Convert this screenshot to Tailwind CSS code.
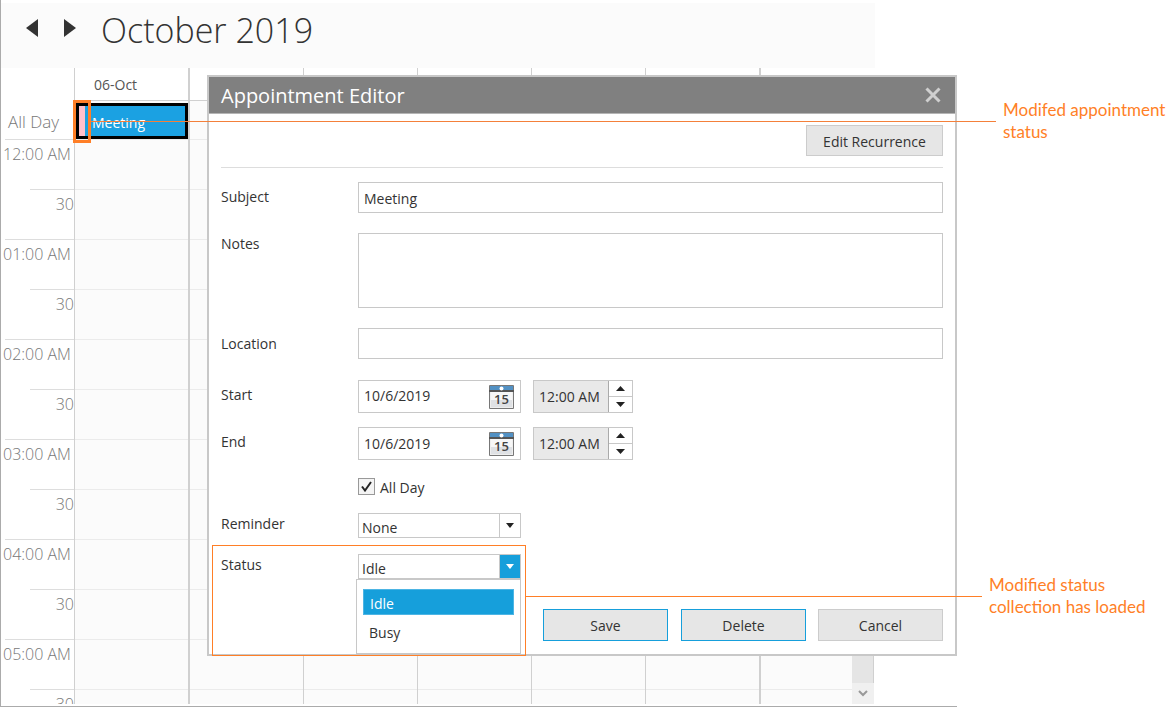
<!DOCTYPE html>
<html lang="en">
<head>
<meta charset="utf-8">
<title>Appointment Editor</title>
<script src="https://cdn.jsdelivr.net/npm/@tailwindcss/browser@4"></script>
</head>
<body class="bg-white">
<div class="flex h-screen overflow-hidden font-['Open_Sans','Noto_Sans',sans-serif] text-sm text-[#333]">
  <main class="relative flex flex-1 flex-col border-b border-l border-[#ababab] pt-[3px] pb-[2px]">
    <section class="mr-[82px] flex min-h-0 flex-1 flex-col" aria-label="Calendar">
      <header class="flex h-[65px] shrink-0 items-start bg-[#fbfbfb] pl-[25px]">
        <button type="button" aria-label="Previous" class="mt-4 h-[19px] w-3"><svg class="h-[19px] w-3" viewBox="0 0 12 19" fill="#333"><path d="M12 0v18L0 9z"/></svg></button>
        <button type="button" aria-label="Next" class="mt-4 ml-[26px] h-[19px] w-3"><svg class="h-[19px] w-3" viewBox="0 0 12 19" fill="#333"><path d="M0 0v18L12 9z"/></svg></button>
        <h1 class="ml-[25px] text-[34px] leading-[54px] font-light">October 2019</h1>
      </header>
      <div class="flex min-h-0 flex-1 overflow-hidden">
        <div class="w-[73px] shrink-0 pl-1 text-base leading-[28px] font-light whitespace-nowrap text-[#777]">
          <div class="h-[71px] pt-10 pl-[3px] text-[17px]">All Day</div>
          <div class="h-[50px] border-t border-[#ddd]"><span class="-ml-[2px]">12:00 AM</span></div>
          <div class="ml-[25px] h-[50px] border-t border-[#ddd] text-right">30</div>
          <div class="h-[50px] border-t border-[#ddd]"><span class="-ml-[2px]">01:00 AM</span></div>
          <div class="ml-[25px] h-[50px] border-t border-[#ddd] text-right">30</div>
          <div class="h-[50px] border-t border-[#ddd]"><span class="-ml-[2px]">02:00 AM</span></div>
          <div class="ml-[25px] h-[50px] border-t border-[#ddd] text-right">30</div>
          <div class="h-[50px] border-t border-[#ddd]"><span class="-ml-[2px]">03:00 AM</span></div>
          <div class="ml-[25px] h-[50px] border-t border-[#ddd] text-right">30</div>
          <div class="h-[50px] border-t border-[#ddd]"><span class="-ml-[2px]">04:00 AM</span></div>
          <div class="ml-[25px] h-[50px] border-t border-[#ddd] text-right">30</div>
          <div class="h-[50px] border-t border-[#ddd]"><span class="-ml-[2px]">05:00 AM</span></div>
          <div class="ml-[25px] h-[50px] border-t border-[#ddd] text-right">30</div>
        </div>
        <div class="flex w-[114px] shrink-0 flex-col border-l border-[#d0d0d0]">
          <div class="h-[33px] border-b border-[#d0d0d0] pl-[19px] leading-[33px] text-[#555]">06-Oct</div>
          <div class="h-[38px] bg-[#fbfbfb] pt-[2px] pl-px">
            <div class="flex h-9 border-[3px] border-black bg-[#1ba1e2] leading-[34px] text-white"><i class="w-[6px] bg-[#ffc0cb]"></i><span class="ml-[7px]">Meeting</span></div>
          </div>
          <div class="flex-1 bg-[repeating-linear-gradient(to_bottom,#ebebeb_0_1px,#fbfbfb_1px_50px)]"></div>
        </div>
        <div class="flex w-[115px] shrink-0 flex-col border-l-2 border-[#d0d0d0]">
          <div class="h-[33px] border-b border-[#d0d0d0]"></div><div class="h-[38px] bg-[#fbfbfb]"></div>
          <div class="flex-1 bg-[repeating-linear-gradient(to_bottom,#ebebeb_0_1px,#fbfbfb_1px_50px)]"></div>
        </div>
        <div class="flex w-[114px] shrink-0 flex-col border-l border-[#d0d0d0]">
          <div class="h-[33px] border-b border-[#d0d0d0]"></div><div class="h-[38px] bg-[#fbfbfb]"></div>
          <div class="flex-1 bg-[repeating-linear-gradient(to_bottom,#ebebeb_0_1px,#fbfbfb_1px_50px)]"></div>
        </div>
        <div class="flex w-[114px] shrink-0 flex-col border-l border-[#d0d0d0]">
          <div class="h-[33px] border-b border-[#d0d0d0]"></div><div class="h-[38px] bg-[#fbfbfb]"></div>
          <div class="flex-1 bg-[repeating-linear-gradient(to_bottom,#ebebeb_0_1px,#fbfbfb_1px_50px)]"></div>
        </div>
        <div class="flex w-[114px] shrink-0 flex-col border-l border-[#d0d0d0]">
          <div class="h-[33px] border-b border-[#d0d0d0]"></div><div class="h-[38px] bg-[#fbfbfb]"></div>
          <div class="flex-1 bg-[repeating-linear-gradient(to_bottom,#ebebeb_0_1px,#fbfbfb_1px_50px)]"></div>
        </div>
        <div class="flex w-[114px] shrink-0 flex-col border-l border-[#d0d0d0]">
          <div class="h-[33px] border-b border-[#d0d0d0]"></div><div class="h-[38px] bg-[#fbfbfb]"></div>
          <div class="flex-1 bg-[repeating-linear-gradient(to_bottom,#ebebeb_0_1px,#fbfbfb_1px_50px)]"></div>
        </div>
        <div class="flex flex-1 flex-col border-l-2 border-[#d0d0d0]">
          <div class="h-[33px] border-b border-[#d0d0d0]"></div><div class="h-[38px] bg-[#fbfbfb]"></div>
          <div class="flex-1 bg-[repeating-linear-gradient(to_bottom,#ebebeb_0_1px,#fbfbfb_1px_50px)]"></div>
        </div>
        <div class="flex w-[23px] shrink-0 flex-col pr-px">
          <div class="h-[33px] border-b border-[#d0d0d0]"></div>
          <div class="flex-1 border-r border-[#d0d0d0] bg-[#e5e5e5]"></div>
          <button type="button" aria-label="Scroll down" class="flex h-[21px] items-center justify-center bg-[#f0f0f0]"><svg width="10" height="7" fill="none" stroke="#999" stroke-width="2"><path d="M1 1l4 4 4-4"/></svg></button>
        </div>
      </div>
    </section>

    <form class="absolute top-[75px] right-0 left-[206px] border-2 border-[#c8c8c8] bg-white" aria-label="Appointment Editor">
      <div class="flex h-[37px] items-center justify-between border-b border-[#b5b5b5] bg-[#808080] pr-[14px] pl-3">
        <h2 class="pt-[2px] text-xl leading-[36px] text-white">Appointment Editor</h2>
        <button type="button" aria-label="Close"><svg width="16" height="16" stroke="#d0d0d0" stroke-width="3"><path d="M1.500 1.500l13 13M14.500 1.500l-13 13"/></svg></button>
      </div>
      <div class="px-3 pb-[13px]">
        <div class="flex justify-end pt-[11px]"><button type="button" class="h-[31px] w-[137px] border border-[#ccc] bg-[#e6e6e6] pt-[3px]">Edit Recurrence</button></div>
        <hr class="mt-[11px] border-[#ddd]">
        <div class="mt-[14px] flex"><label for="subject" class="w-[137px] leading-[30px]">Subject</label><input id="subject" value="Meeting" class="h-[31px] min-w-0 flex-1 border border-[#c8c8c8] px-[5px] pt-[2px]"></div>
        <div class="mt-5 flex"><label for="notes" class="w-[137px] leading-[22px]">Notes</label><textarea id="notes" class="h-[75px] min-w-0 flex-1 resize-none border border-[#c8c8c8] px-[5px]"></textarea></div>
        <div class="mt-5 flex"><label for="location" class="w-[137px] leading-[31px]">Location</label><input id="location" class="h-[31px] min-w-0 flex-1 border border-[#c8c8c8] px-[5px]"></div>

        <div class="mt-[21px] flex">
          <label for="start" class="w-[137px] leading-[30px]">Start</label>
          <div class="flex h-[33px] w-[163px] border border-[#c8c8c8]">
            <input id="start" value="10/6/2019" class="min-w-0 flex-1 pb-px pl-[5px]">
            <button type="button" aria-label="Pick start date" class="mr-[6px]"><svg width="25" height="24" viewBox="0 0 25 24"><path d="M.5.5h24v23H.5z" fill="#eee" stroke="#777"/><path d="M2 6h21v16H2z" fill="#f7f7f7"/><path d="M2 15h21v7H2z" fill="#dfe1e4"/><path d="M1 1h23v5H1z" fill="#5291c4"/><path d="M0 5h25v2H0z" fill="#555"/><circle cx="12.500" cy="3.500" r="2" fill="#fff"/><text x="12.500" y="19" text-anchor="middle" font-family="Open Sans" font-size="13" font-weight="600" fill="#444">15</text></svg></button>
          </div>
          <div class="ml-3 flex h-[33px] w-[100px] border border-[#c8c8c8]">
            <input aria-label="Start time" value="12:00 AM" class="w-[75px] border-r border-[#aaa] bg-[#e9e9e9] pl-[5px]">
            <div class="flex flex-1 flex-col">
              <button type="button" aria-label="Later" class="flex flex-1 items-center justify-center border-b border-[#c8c8c8]"><svg width="9" height="5" fill="#222"><path d="M0 5l4.500-5L9 5z"/></svg></button>
              <button type="button" aria-label="Earlier" class="flex flex-1 items-center justify-center"><svg width="9" height="5" fill="#222"><path d="M0 0l4.500 5L9 0z"/></svg></button>
            </div>
          </div>
        </div>
        <div class="mt-[14px] flex">
          <label for="end" class="w-[137px] leading-[30px]">End</label>
          <div class="flex h-[33px] w-[163px] border border-[#c8c8c8]">
            <input id="end" value="10/6/2019" class="min-w-0 flex-1 pl-[5px]">
            <button type="button" aria-label="Pick end date" class="mr-[6px]"><svg width="25" height="24" viewBox="0 0 25 24"><path d="M.5.5h24v23H.5z" fill="#eee" stroke="#777"/><path d="M2 6h21v16H2z" fill="#f7f7f7"/><path d="M2 15h21v7H2z" fill="#dfe1e4"/><path d="M1 1h23v5H1z" fill="#5291c4"/><path d="M0 5h25v2H0z" fill="#555"/><circle cx="12.500" cy="3.500" r="2" fill="#fff"/><text x="12.500" y="19" text-anchor="middle" font-family="Open Sans" font-size="13" font-weight="600" fill="#444">15</text></svg></button>
          </div>
          <div class="ml-3 flex h-[33px] w-[100px] border border-[#c8c8c8]">
            <input aria-label="End time" value="12:00 AM" class="w-[75px] border-r border-[#aaa] bg-[#e9e9e9] pt-px pl-[5px]">
            <div class="flex flex-1 flex-col">
              <button type="button" aria-label="Later" class="flex flex-1 items-center justify-center border-b border-[#c8c8c8]"><svg width="9" height="5" fill="#222"><path d="M0 5l4.500-5L9 5z"/></svg></button>
              <button type="button" aria-label="Earlier" class="flex flex-1 items-center justify-center"><svg width="9" height="5" fill="#222"><path d="M0 0l4.500 5L9 0z"/></svg></button>
            </div>
          </div>
        </div>
        <div class="mt-[18px] ml-[137px] flex h-[17px]">
          <span class="relative h-[17px] w-[17px]">
            <input id="allday" type="checkbox" checked class="block h-[17px] w-[17px] appearance-none border border-[#999] bg-[#f4f4f4]">
            <svg class="pointer-events-none absolute top-[3px] left-[3px]" width="11" height="11" fill="none" stroke="#222" stroke-width="2"><path d="M1 5.500l3 4L10 1"/></svg>
          </span>
          <label for="allday" class="ml-[5px] leading-[20px]">All Day</label>
        </div>
        <div class="mt-[18px] flex">
          <label for="reminder" class="w-[137px] leading-[22px]">Reminder</label>
          <div class="relative h-[25px] w-[163px]">
            <select id="reminder" class="block h-[25px] w-full appearance-none border border-[#c8c8c8] bg-white pt-1 pl-[3px]"><option>None</option></select>
            <span class="pointer-events-none absolute inset-y-0 right-0 flex w-[22px] items-center justify-center border border-[#c8c8c8]"><svg width="8" height="5" fill="#222"><path d="M0 0h8L4 5z"/></svg></span>
          </div>
        </div>
        <div class="mt-4 flex">
          <label for="status" class="w-[137px] leading-[22px]">Status</label>
          <div class="relative h-[25px] w-[163px]">
            <select id="status" class="block h-[25px] w-full appearance-none border border-[#c8c8c8] bg-white pt-1 pl-[3px]"><option>Idle</option><option>Busy</option></select>
            <span class="pointer-events-none absolute inset-y-0 right-0 flex w-[22px] items-center justify-center border border-[#c8c8c8] bg-[#169fdb]"><svg width="8" height="5" fill="#fff"><path d="M0 0h8L4 5z"/></svg></span>
            <ul role="listbox" aria-label="Status options" class="absolute top-[25px] right-0 -left-[2px] h-[75px] border border-[#c8c8c8] bg-white pt-[9px] pr-[5px] pl-[6px]">
              <li role="option" aria-selected="true" class="mr-px h-[26px] border border-[#4db5e4] bg-[#169fdb] pl-[6px] leading-[27px] text-white">Idle</li>
              <li role="option" aria-selected="false" class="mt-1 pl-[6px] leading-[27px]">Busy</li>
            </ul>
          </div>
        </div>
        <div class="mt-[30px] flex justify-end">
          <button type="submit" class="h-8 w-[125px] border border-[#169fdb] bg-[#e6e6e6] pt-[2px]">Save</button>
          <button type="button" class="ml-[13px] h-8 w-[125px] border border-[#169fdb] bg-[#e6e6e6] pt-[2px]">Delete</button>
          <button type="button" class="ml-3 h-8 w-[125px] border border-[#ccc] bg-[#e6e6e6] pt-[2px]">Cancel</button>
        </div>
      </div>
    </form>

    <!-- Callout frames and leader lines -->
    <div class="pointer-events-none absolute top-[100px] left-[72px] h-[43px] w-[18px] border-[3px] border-[#ff7f27]"></div>
    <div class="pointer-events-none absolute top-[121px] -right-[39px] left-[90px] h-px bg-[#f4803a]"></div>
    <div class="pointer-events-none absolute top-[545px] left-[211px] h-[111px] w-[314px] border border-[#ff7f27]"></div>
    <div class="pointer-events-none absolute top-[596px] -right-[25px] left-[525px] h-px bg-[#ff7f27]"></div>
  </main>
  <aside class="w-[213px] shrink-0 pt-[99px] font-['Lato','Open_Sans',sans-serif] text-[17px] leading-[22px] whitespace-nowrap text-[#ff7f27]">
    <p class="pl-[46px]">Modifed appointment<br>status</p>
    <p class="mt-[431px] pl-8">Modified status<br>collection has loaded</p>
  </aside>
</div>
</body>
</html>
